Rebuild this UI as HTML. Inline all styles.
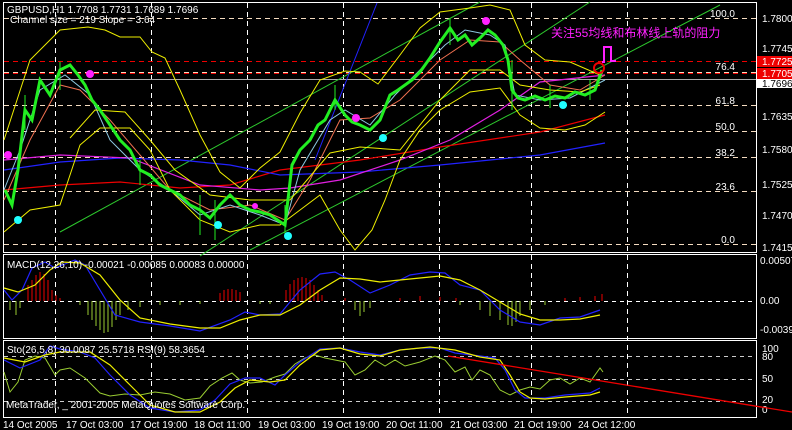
<!DOCTYPE html>
<html><head><meta charset="utf-8"><style>
html,body{margin:0;padding:0;background:#000;width:792px;height:430px;overflow:hidden}
svg{display:block}
text{font-family:"Liberation Sans","Noto Sans CJK SC",sans-serif;font-size:10px;fill:#fff}
</style></head><body>
<svg width="792" height="430" viewBox="0 0 792 430" xmlns="http://www.w3.org/2000/svg">
<rect width="792" height="430" fill="#000"/>
<!-- panel borders -->
<g stroke="#fff" fill="none" stroke-width="1">
<rect x="3.5" y="2.5" width="753" height="250"/>
<rect x="3.5" y="254.5" width="753" height="84"/>
<rect x="3.5" y="340.5" width="753" height="77"/>
</g>
<!-- vertical dashed grid -->
<g stroke="#fff" stroke-dasharray="5,4" stroke-width="1">
<line x1="55.5" y1="3" x2="55.5" y2="418"/><line x1="151.5" y1="3" x2="151.5" y2="418"/>
<line x1="247.5" y1="3" x2="247.5" y2="418"/><line x1="343.5" y1="3" x2="343.5" y2="418"/>
<line x1="439.5" y1="3" x2="439.5" y2="418"/><line x1="531.5" y1="3" x2="531.5" y2="418"/>
<line x1="627.5" y1="3" x2="627.5" y2="418"/>
</g>
<!-- fib levels -->
<g stroke="#f5dcc0" stroke-dasharray="5,4">
<line x1="4" y1="18.5" x2="756" y2="18.5"/><line x1="4" y1="72.5" x2="756" y2="72.5"/>
<line x1="4" y1="105.5" x2="756" y2="105.5"/><line x1="4" y1="131.5" x2="756" y2="131.5"/>
<line x1="4" y1="157.5" x2="756" y2="157.5"/><line x1="4" y1="191.5" x2="756" y2="191.5"/>
<line x1="4" y1="244.5" x2="756" y2="244.5"/>
</g>
<g stroke="#e00" stroke-dasharray="5,4"><line x1="4" y1="61.5" x2="756" y2="61.5"/><line x1="4" y1="73.5" x2="756" y2="73.5"/></g>
<line x1="4" y1="79.5" x2="756" y2="79.5" stroke="#aaa"/>
<g font-size="10">
<text x="735" y="17" text-anchor="end">100.0</text><text x="735" y="70" text-anchor="end">76.4</text>
<text x="735" y="104" text-anchor="end">61.8</text><text x="735" y="130" text-anchor="end">50.0</text>
<text x="735" y="156" text-anchor="end">38.2</text><text x="735" y="190" text-anchor="end">23.6</text>
<text x="735" y="243" text-anchor="end">0.0</text>
</g>
<!-- green channel -->
<g stroke="#2dc82d" fill="none" stroke-width="1">
<line x1="60" y1="232" x2="480" y2="2"/>
<line x1="250" y1="250" x2="720" y2="5"/>
<line x1="200" y1="256" x2="590" y2="2"/>
</g>
<line x1="315" y1="160" x2="377" y2="3" stroke="#22f" stroke-width="1"/>
<!-- MAs -->
<polyline fill="none" stroke="#e00" stroke-width="1.2" points="4,190 60,185 120,182 180,188 230,185 280,170 360,160 440,147 540,132 605,115"/>
<polyline fill="none" stroke="#22f" stroke-width="1.2" points="4,170 60,162 120,158 180,160 230,165 280,175 360,172 440,165 540,155 605,143"/>
<polyline fill="none" stroke="#e020e0" stroke-width="1.2" points="4,160 60,155 130,158 200,185 260,190 290,188 340,180 400,160 450,140 500,110 540,82 605,75"/>
<polyline fill="none" stroke="#f07050" stroke-width="1" points="4,200 30,140 60,85 80,90 110,120 140,155 170,190 210,210 250,205 285,220 310,180 340,120 370,118 400,100 440,60 470,40 500,42 520,60 550,85 580,90 605,75"/>
<polyline fill="none" stroke="#8cc8e0" stroke-width="1" points="4,190 20,150 40,90 65,75 90,95 110,140 140,170 170,190 200,215 230,205 260,215 285,225 300,170 330,120 345,110 370,125 395,95 420,70 445,45 465,30 490,35 505,45 515,95 540,100 570,98 605,80"/>
<polyline fill="none" stroke="#ee0" stroke-width="1" points="4,140 30,60 60,30 88,27 105,30 120,37 140,37 152,52 165,58 180,90 200,135 220,172 240,188 260,168 280,152 300,113 320,80 345,71 360,72 378,84 400,55 420,28 440,12 470,8 490,5 510,10 525,45 545,60 570,62 600,75"/>
<polyline fill="none" stroke="#ee0" stroke-width="1" points="4,232 30,210 60,205 80,145 100,128 130,128 150,150 170,190 200,220 230,232 260,225 280,225 300,210 320,195 340,230 355,250 372,230 385,200 400,160 420,130 440,110 470,92 500,88 520,115 540,128 565,130 585,125 605,112"/>
<polyline fill="none" stroke="#ee0" stroke-width="1" points="70,138 95,110 125,112 150,140 175,170 210,195 250,200 290,200 330,153 360,147 400,150 440,100 470,70 500,70 520,85 550,90 580,92 600,85"/>
<!-- price candles approx -->
<polyline fill="none" stroke="#22ee22" stroke-width="3" points="5,190 12,205 18,170 25,110 32,120 40,80 50,95 60,70 70,65 78,75 85,85 92,100 100,110 110,125 120,140 130,150 140,170 150,175 160,185 170,190 180,195 190,205 200,210 210,218 220,205 230,195 240,205 250,210 260,212 270,215 285,225 292,165 300,150 310,140 318,125 325,120 335,100 345,115 352,122 360,125 370,130 380,120 390,95 398,90 405,85 412,80 420,72 430,58 440,42 450,28 458,40 465,35 472,45 480,38 488,30 495,35 503,45 508,60 512,90 518,98 525,100 535,96 545,100 555,96 565,98 575,92 585,95 595,90 602,70"/>
<g stroke="#22ee22" stroke-width="1">
<line x1="25" y1="95" x2="25" y2="130"/><line x1="60" y1="62" x2="60" y2="90"/><line x1="140" y1="160" x2="140" y2="185"/>
<line x1="200" y1="195" x2="200" y2="235"/><line x1="215" y1="200" x2="215" y2="240"/><line x1="285" y1="205" x2="285" y2="238"/>
<line x1="335" y1="85" x2="335" y2="110"/><line x1="450" y1="18" x2="450" y2="45"/><line x1="512" y1="60" x2="512" y2="110"/>
<line x1="550" y1="85" x2="550" y2="108"/><line x1="590" y1="80" x2="590" y2="100"/>
</g>
<!-- dots -->
<g fill="#ff20ff"><circle cx="8" cy="155" r="4"/><circle cx="90" cy="74" r="4"/><circle cx="356" cy="118" r="4"/><circle cx="486" cy="21" r="4"/><circle cx="255" cy="206" r="3"/></g>
<g fill="#20ffff"><circle cx="18" cy="220" r="4"/><circle cx="218" cy="225" r="4"/><circle cx="288" cy="236" r="4"/><circle cx="383" cy="138" r="4"/><circle cx="563" cy="105" r="4"/></g>
<circle cx="599" cy="68" r="5" fill="none" stroke="#e00" stroke-width="2"/>
<polyline fill="none" stroke="#ff20ff" stroke-width="2" points="602,62 604,62 604,47 611,47 611,61 616,61"/>
<text x="551" y="37" fill="#ff20ff" style="fill:#ff20ff;font-size:12px">关注55均线和布林线上轨的阻力</text>
<text x="7" y="13">GBPUSD,H1  1.7708 1.7731 1.7689 1.7696</text>
<text x="10" y="23">Channel size = 219 Slope = 3.64</text>
<!-- price axis -->
<g font-size="10">
<text x="762" y="22">1.7800</text><text x="762" y="52">1.7745</text>
<rect x="757" y="56" width="35" height="11" fill="#e00"/><text x="762" y="65">1.7725</text>
<rect x="757" y="68" width="35" height="11" fill="#e00"/><text x="762" y="77">1.7705</text>
<rect x="757" y="79" width="35" height="9" fill="#fff"/><text x="762" y="87" style="fill:#000">1.7696</text>
<text x="762" y="120">1.7635</text><text x="762" y="153">1.7580</text><text x="762" y="188">1.7525</text>
<text x="762" y="219">1.7470</text><text x="762" y="251">1.7415</text>
<text x="760" y="264">0.00507</text><text x="760" y="304">0.00</text><text x="760" y="333">-0.0039</text>
<text x="762" y="352">100</text><text x="762" y="360">80</text><text x="762" y="382">50</text><text x="762" y="403">20</text><text x="762" y="413">0</text>
</g>
<!-- MACD -->
<line x1="4" y1="301.5" x2="756" y2="301.5" stroke="#fff" stroke-dasharray="4,4"/>
<g stroke="#e00"><path d="M28,301V285M32,301V280M36,301V275M40,301V272M44,301V274M48,301V280M52,301V290M56,301V295M60,301V298M220,301V293M224,301V290M228,301V289M232,301V289M236,301V290M240,301V292M286,301V290M290,301V284M294,301V280M298,301V278M302,301V277M306,301V278M310,301V280M314,301V285M318,301V290M322,301V295M345,301V298M400,301V298M420,301V296M440,301V297M456,301V298M565,301V298M580,301V297M595,301V296M602,301V294"/></g>
<g stroke="#9acd32"><path d="M10,301V310M16,301V315M20,301V308M80,301V305M88,301V315M92,301V320M96,301V326M100,301V330M104,301V333M108,301V332M112,301V327M116,301V320M120,301V315M128,301V310M140,301V307M160,301V305M180,301V305M200,301V304M260,301V304M270,301V304M355,301V310M360,301V316M364,301V312M370,301V308M460,301V305M480,301V310M490,301V316M500,301V320M508,301V325M512,301V326M516,301V322M520,301V316M530,301V310M545,301V305"/></g>
<polyline fill="none" stroke="#22f" stroke-width="1.2" points="4,290 12,300 22,290 32,268 45,262 55,268 75,260 85,265 100,290 115,315 140,322 170,326 200,331 230,320 245,312 260,315 280,314 300,290 320,274 335,272 350,280 370,293 390,285 410,275 430,272 445,273 460,285 480,290 500,310 520,322 540,325 560,318 580,317 600,310"/>
<polyline fill="none" stroke="#ee0" stroke-width="1.2" points="4,288 18,292 35,285 50,270 62,262 80,263 100,275 120,300 140,318 170,324 200,328 220,328 240,320 260,315 280,315 300,305 320,290 340,278 360,279 380,282 400,280 420,278 440,276 460,280 480,290 500,302 520,314 540,320 560,320 580,319 600,315"/>
<text x="7" y="268">MACD(12,26,10) -0.00021 -0.00085 0.00083 0.00000</text>
<!-- Sto -->
<g stroke="#ccc" stroke-dasharray="4,4"><line x1="4" y1="356.5" x2="756" y2="356.5"/><line x1="4" y1="379.5" x2="756" y2="379.5"/><line x1="4" y1="401.5" x2="756" y2="401.5"/></g>
<polyline fill="none" stroke="#9acd32" stroke-width="1" points="4,372 10,392 18,382 25,360 35,356 45,358 55,375 60,370 70,368 85,378 100,393 110,396 125,394 140,395 155,392 170,394 185,400 200,398 210,386 222,378 232,373 240,380 250,383 262,382 275,377 285,374 295,364 305,358 315,355 325,358 345,362 355,375 365,370 375,360 385,366 395,360 405,366 420,362 435,356 445,360 455,372 465,367 472,380 480,370 490,375 500,390 510,395 520,390 530,387 540,389 550,380 560,378 570,384 580,378 590,382 600,368 603,372"/>
<polyline fill="none" stroke="#22f" stroke-width="1.2" points="4,360 20,368 40,360 50,346 60,349 80,352 95,358 110,375 130,395 150,408 175,412 200,410 215,400 230,384 245,378 260,378 275,385 285,375 300,362 320,349 340,348 360,352 380,355 400,350 420,348 440,348 455,353 480,356 495,358 505,370 515,390 525,398 545,398 565,395 590,393 600,388"/>
<polyline fill="none" stroke="#ee0" stroke-width="1.2" points="4,358 25,362 45,355 60,352 90,352 110,365 130,385 150,405 175,412 200,412 220,402 235,388 250,380 270,382 285,380 300,365 320,350 340,348 360,354 380,356 400,350 430,347 455,350 480,357 500,360 510,375 520,392 530,398 545,399 565,397 590,395 600,392"/>
<line x1="448" y1="356" x2="792" y2="412" stroke="#e00" stroke-width="1.3"/>
<text x="7" y="353">Sto(26,5,8) 30.0087 25.5718  RSI(9) 58.3654</text>
<text x="6" y="408">MetaTrader, _ 2001-2005 MetaQuotes Software Corp.</text>
<!-- time axis -->
<g font-size="10">
<text x="3" y="428">14 Oct 2005</text><text x="66" y="428">17 Oct 03:00</text><text x="130" y="428">17 Oct 19:00</text>
<text x="194" y="428">18 Oct 11:00</text><text x="258" y="428">19 Oct 03:00</text><text x="322" y="428">19 Oct 19:00</text>
<text x="386" y="428">20 Oct 11:00</text><text x="450" y="428">21 Oct 03:00</text><text x="514" y="428">21 Oct 19:00</text>
<text x="578" y="428">24 Oct 12:00</text>
</g>
</svg>
</body></html>
